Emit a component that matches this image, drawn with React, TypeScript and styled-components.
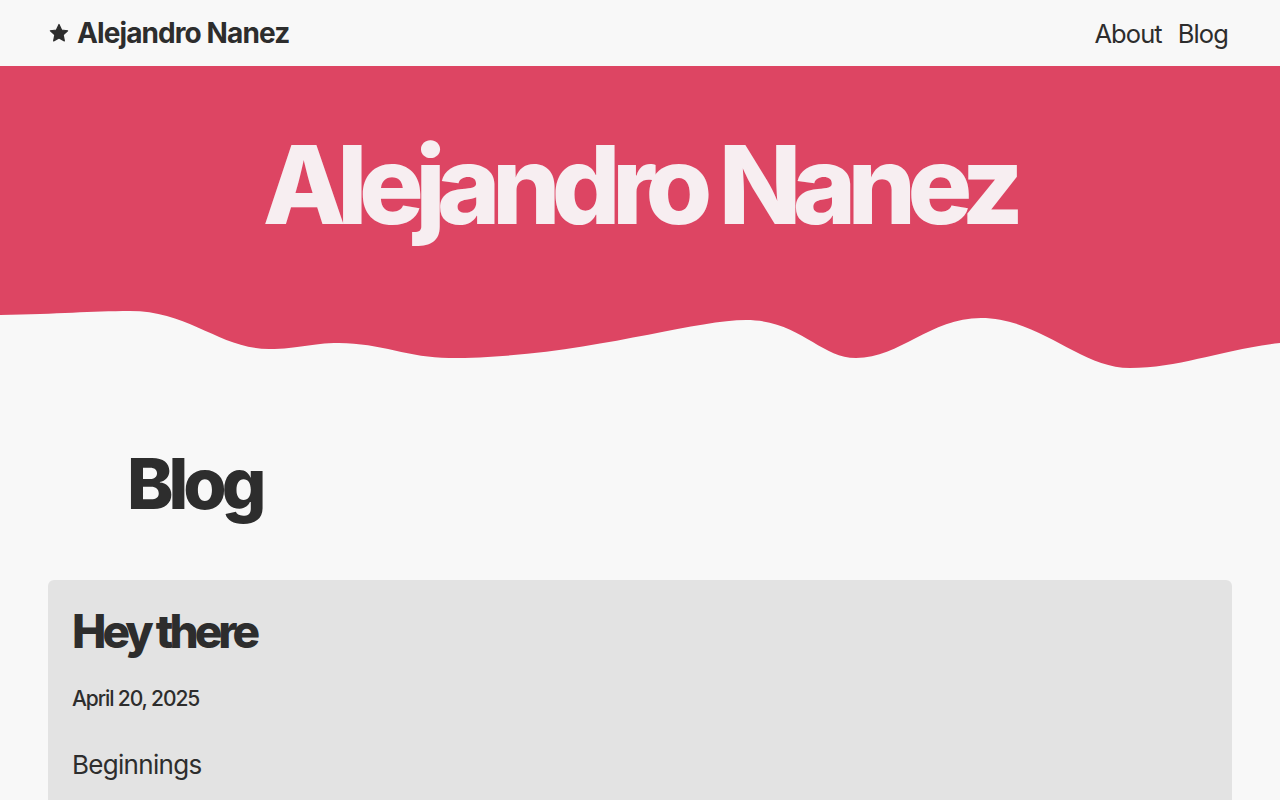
import React from "react";
import styled, { createGlobalStyle } from "styled-components";

const Global = createGlobalStyle`
  html, body { margin: 0; padding: 0; background: #f8f8f8; }
  body { font-family: Inter, "Noto Sans", sans-serif; color: #2d2d2d; }
  * { box-sizing: border-box; }
`;

const Header = styled.header`
  height: 66px;
  display: flex;
  align-items: center;
  justify-content: space-between;
  padding: 0 52px 0 49px;
  background: #f8f8f8;
`;

const Brand = styled.a`
  display: flex;
  align-items: center;
  gap: 8px;
  font-family: Inter, sans-serif;
  font-weight: 700;
  font-size: 28px;
  letter-spacing: -0.9px;
  color: #2d2d2d;
  text-decoration: none;
`;

const Nav = styled.nav`
  display: flex;
  gap: 16px;
`;

const NavLink = styled.a`
  font-family: Inter, sans-serif;
  font-size: 25.5px;
  font-weight: 400;
  letter-spacing: -0.9px;
  color: #2d2d2d;
  text-decoration: none;
`;

const Hero = styled.section`
  background: #dd4563;
  height: 234px;
  display: flex;
  justify-content: center;
  padding-top: 65px;
`;

const HeroTitle = styled.h1`
  margin: 0;
  font-family: Inter, sans-serif;
  font-weight: 800;
  font-size: 108px;
  line-height: 1;
  letter-spacing: -8.7px;
  color: #f7eef1;
  padding-right: 2px;
`;

const Wave = styled.svg`
  display: block;
  width: 100%;
  height: 72px;
`;

const Main = styled.main`
  padding: 77px 48px 0;
`;

const PageTitle = styled.h2`
  margin: 0 0 0 79px;
  font-family: Inter, sans-serif;
  font-weight: 800;
  font-size: 70px;
  line-height: 1;
  letter-spacing: -5px;
  color: #2d2d2d;
`;

const Card = styled.article`
  margin-top: 61px;
  background: #e3e3e3;
  border-radius: 6px;
  padding: 24px 24px 24px;
  min-height: 240px;
`;

const CardTitle = styled.h3`
  margin: 0;
  font-family: Inter, sans-serif;
  font-weight: 800;
  font-size: 46px;
  line-height: 1.2;
  letter-spacing: -4px;
`;

const CardDate = styled.p`
  margin: 27px 0 0;
  font-family: Inter, sans-serif;
  font-weight: 500;
  font-size: 21px;
  line-height: 1.2;
  letter-spacing: -1.1px;
`;

const CardText = styled.p`
  margin: 38px 0 0;
  font-family: Inter, sans-serif;
  font-weight: 400;
  font-size: 26px;
  line-height: 1.2;
  letter-spacing: -0.7px;
`;

export default function App() {
  return (
    <>
      <Global />
      <Header>
        <Brand href="#">
          <svg width="20" height="20" viewBox="0 0 24 24">
            <path
              d="M12 1.8l3.1 6.6 7.2.9-5.3 5 1.4 7.1L12 17.9l-6.4 3.5 1.4-7.1-5.3-5 7.2-.9z"
              fill="#2d2d2d"
              stroke="#2d2d2d"
              strokeWidth="1.5"
              strokeLinejoin="round"
            />
          </svg>
          Alejandro Nanez
        </Brand>
        <Nav>
          <NavLink href="#">About</NavLink>
          <NavLink href="#">Blog</NavLink>
        </Nav>
      </Header>
      <Hero>
        <HeroTitle>Alejandro Nanez</HeroTitle>
      </Hero>
      <Wave viewBox="0 0 1280 72" preserveAspectRatio="none">
        <path
          fill="#dd4563"
          d="M0,0 L0,15 C60,14 90,11 130,11 C190,11 220,49 269,49 C300,49 310,43 339,43 C380,43 410,58 449,58 C580,58 690,20 746,20 C800,20 820,58 856,58 C900,58 930,18 981,18 C1040,18 1080,68 1130,68 C1180,68 1220,50 1280,43 L1280,0 Z"
        />
      </Wave>
      <Main>
        <PageTitle>Blog</PageTitle>
        <Card>
          <CardTitle>Hey there</CardTitle>
          <CardDate>April 20, 2025</CardDate>
          <CardText>Beginnings</CardText>
        </Card>
      </Main>
    </>
  );
}
